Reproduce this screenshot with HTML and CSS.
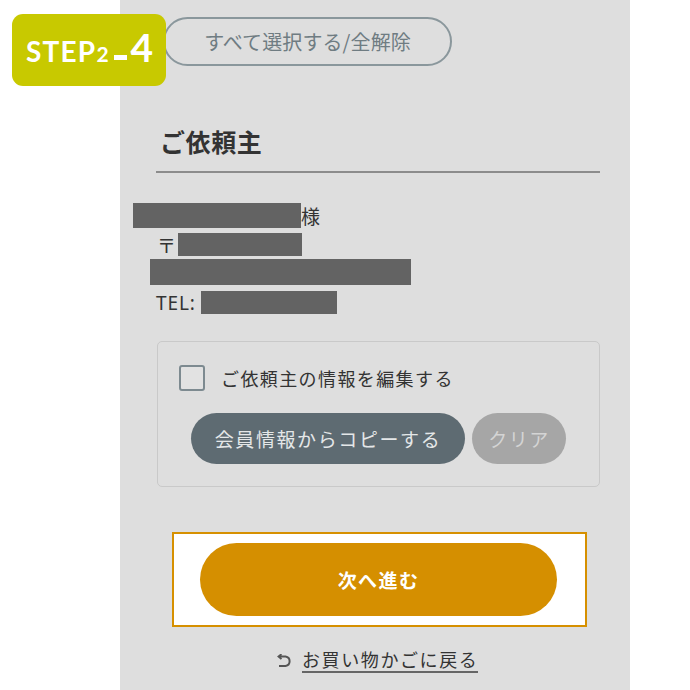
FILE: index.html
```html
<!DOCTYPE html>
<html lang="ja">
<head>
<meta charset="utf-8">
<link rel="stylesheet" href="styles.css">
</head>
<body>
<div class="page">
  <div class="badge"><span class="badge-step">STEP</span><span class="badge-two">2</span><span class="badge-dash"></span><span class="badge-num">4</span></div>
  <main class="panel">
    <button class="select-all">すべて選択する/全解除</button>
    <h2 class="heading">ご依頼主</h2>
    <div class="info">
      <div class="row row-name"><span class="redact r1"></span><span>様</span></div>
      <div class="row row-zip"><span>〒</span><span class="redact r2"></span></div>
      <div class="row row-addr"><span class="redact r3"></span></div>
      <div class="row row-tel"><span class="tel">TEL:</span><span class="redact r4"></span></div>
    </div>
    <div class="options">
      <label class="check">
        <span class="checkbox"></span>
        <span class="check-label">ご依頼主の情報を編集する</span>
      </label>
      <div class="opt-buttons">
        <button class="btn-copy">会員情報からコピーする</button>
        <button class="btn-clear">クリア</button>
      </div>
    </div>
    <div class="next-frame">
      <button class="btn-next">次へ進む</button>
    </div>
    <a class="back" href="#">
      <svg class="back-icon" width="18" height="14" viewBox="0 0 18 14"><path d="M5 2.5 H10.5 A4.8 4.8 0 0 1 10.5 12 H4" fill="none" stroke="#555" stroke-width="2"/><path d="M6.5 0.2 L3.6 2.6 L6.5 5" fill="none" stroke="#555" stroke-width="2"/></svg>
      <span class="back-text">お買い物かごに戻る</span>
    </a>
  </main>
</div>
</body>
</html>
```

FILE: styles.css
```css
* { box-sizing: border-box; }
html, body { margin: 0; padding: 0; background: #ffffff; }
body { font-family: "Noto Sans CJK JP", "Noto Sans", sans-serif; color: #333; }
.page { position: relative; width: 690px; height: 690px; padding-left: 120px; overflow: hidden; }
.badge {
  position: absolute; left: 12px; top: 14px; width: 154px; height: 72px;
  background: #c8c900; border-radius: 11px; color: #fff;
  display: flex; align-items: baseline; padding: 0 0 0 14px;
  font-family: "Lato", "DejaVu Sans", sans-serif; font-weight: 700; z-index: 2;
  line-height: 1;
}
.badge::before { content: ""; display: block; height: 48px; }
.badge-step { font-size: 28px; letter-spacing: 1.2px; }
.badge-two { font-size: 21px; margin-left: 0; }
.badge-dash { width: 13px; height: 5px; background: #fff; margin: 0 4px 26px 5px; align-self: flex-end; }
.badge-num { font-size: 39px; }
.panel {
  width: 510px; height: 690px; background: #dedede;
  padding: 17px 30px 0 36px; display: flex; flex-direction: column; align-items: flex-start;
}
button { font-family: inherit; cursor: pointer; }
.select-all {
  margin-left: 7px; width: 289px; height: 49px; border: 2px solid #8a979c; border-radius: 25px;
  background: transparent; color: #6f7c82; font-size: 20px; letter-spacing: 0.1px; padding: 0;
}
.heading {
  margin: 58px 0 0 0; align-self: stretch; font-size: 25px; font-weight: 700; line-height: 34px;
  padding: 0 0 13px 4px; border-bottom: 2px solid #8c8c8c; color: #333; letter-spacing: 0.6px;
}
.info { margin-top: 30px; display: flex; flex-direction: column; font-size: 19px; color: #333; }
.row { display: flex; align-items: center; }
.redact { display: inline-block; background: #636363; }
.row-name { height: 25px; margin-left: -23px; }
.r1 { width: 168px; height: 25px; }
.row-zip { height: 23px; margin-top: 5px; margin-left: 1px; }
.r2 { width: 124px; height: 23px; margin-left: 2px; }
.row-addr { height: 26px; margin-top: 3px; margin-left: -6px; }
.r3 { width: 261px; height: 26px; }
.row-tel { height: 23px; margin-top: 6px; }
.tel { font-family: "Noto Sans", sans-serif; font-size: 19px; letter-spacing: 0.9px; }
.r4 { width: 136px; height: 23px; margin-left: 5px; }
.options {
  margin: 27px 0 0 1px; align-self: stretch; border: 1px solid #c9c9c9; border-radius: 5px;
  padding: 23px 0 20px 21px; height: 146px;
}
.check { display: flex; align-items: center; }
.checkbox { width: 26px; height: 26px; border: 2px solid #7d8a90; border-radius: 3px; background: #e2e2e2; }
.check-label { margin-left: 16px; font-size: 18px; letter-spacing: 1.4px; color: #333; }
.opt-buttons { display: flex; gap: 7px; margin: 22px 0 0 12px; }
.btn-copy {
  width: 274px; height: 51px; border: none; border-radius: 26px; background: #5e6b72;
  color: #e4e7e8; font-size: 19px; letter-spacing: 1.6px; padding: 0;
}
.btn-clear {
  width: 94px; height: 51px; border: none; border-radius: 26px; background: #a6a6a6;
  color: #d4d4d4; font-size: 19px; letter-spacing: 1.5px; padding: 0;
}
.next-frame {
  margin: 45px 0 0 16px; width: 415px; height: 95px; border: 2px solid #d69000; background: #fff;
  padding: 9px 0 0 26px;
}
.btn-next {
  width: 357px; height: 73px; border: none; border-radius: 37px; background: #d58f00;
  color: #fff; font-size: 19px; font-weight: 700; letter-spacing: 1.4px; padding: 0;
}
.back {
  margin: 20px 0 0 119px; display: flex; align-items: center; text-decoration: none; color: #333;
}
.back-icon { display: block; margin-top: 1px; }
.back-text {
  margin-left: 9px; font-size: 18px; line-height: 24px; letter-spacing: 1.6px;
  border-bottom: 2px solid #666;
}
```
